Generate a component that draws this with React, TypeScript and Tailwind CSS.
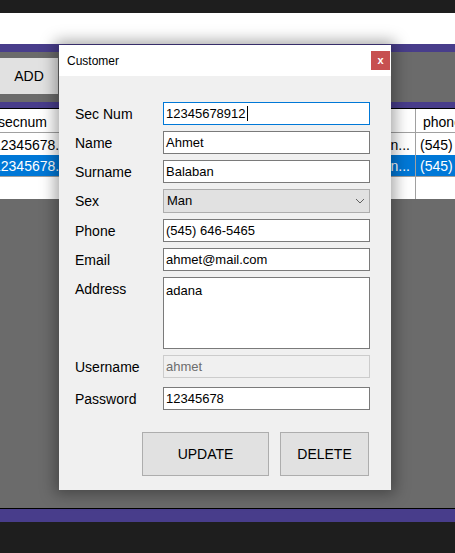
import React from 'react';

const font = "font-['Liberation_Sans',Arial,sans-serif]";

type FieldKind = 'normal' | 'focused' | 'disabled';

const fieldStyles: Record<FieldKind, string> = {
  normal: 'border-[#7a7a7a] bg-white text-black',
  focused: 'border-[#0078d7] bg-white text-black',
  disabled: 'border-[#cccccc] bg-[#f0f0f0] text-[#6d6d6d]',
};

function Field({ children, kind = 'normal' }: { children?: React.ReactNode; kind?: FieldKind }) {
  return (
    <div className={`h-[23px] w-[207px] border pl-[2px] flex items-center text-[13px] ${fieldStyles[kind]}`}>
      {children}
    </div>
  );
}

function Row({ label, children, className = '' }: { label: string; children: React.ReactNode; className?: string }) {
  return (
    <div className={`flex items-start ${className}`}>
      <div className="w-[88px] h-[23px] pt-[2px] flex items-center text-[14px] text-black">{label}</div>
      {children}
    </div>
  );
}

function CustomerDialog() {
  return (
    <div className="absolute left-[59px] top-[45px] w-[332px] h-[445px] bg-[#f0f0f0] shadow-[0_0_14px_4px_rgba(0,0,0,0.35)] flex flex-col">
      {/* title bar */}
      <div className="h-[31px] bg-white flex items-center justify-between pl-[8px] pr-[1px]">
        <span className="text-[12px] text-black">Customer</span>
        <div className="w-[19px] h-[19px] bg-[#c75050] flex items-center justify-center text-white text-[11px] font-bold leading-none pb-[1px]">
          x
        </div>
      </div>

      <div className="flex flex-col pl-[16px] pt-[26px]">
        <Row label="Sec Num">
          <Field kind="focused">
            <span>12345678912</span>
            <span className="w-px h-[15px] bg-black ml-px" />
          </Field>
        </Row>
        <Row label="Name" className="mt-[6px]">
          <Field>Ahmet</Field>
        </Row>
        <Row label="Surname" className="mt-[6px]">
          <Field>Balaban</Field>
        </Row>
        <Row label="Sex" className="mt-[6px]">
          <div className="h-[24px] w-[207px] border border-[#adadad] bg-[#e1e1e1] pl-[3px] pr-[4px] flex items-center justify-between text-[13px] text-black">
            <span>Man</span>
            <svg width="10" height="6" viewBox="0 0 10 6" fill="none">
              <polyline points="1,1 5,5 9,1" stroke="#606060" strokeWidth="1" />
            </svg>
          </div>
        </Row>
        <Row label="Phone" className="mt-[6px]">
          <Field>(545) 646-5465</Field>
        </Row>
        <Row label="Email" className="mt-[6px]">
          <Field>ahmet@mail.com</Field>
        </Row>
        <Row label="Address" className="mt-[6px]">
          <div className="h-[72px] w-[207px] border border-[#7a7a7a] bg-white pl-[2px] pt-[3px] text-[13px] text-black">
            adana
          </div>
        </Row>
        <Row label="Username" className="mt-[6px]">
          <Field kind="disabled">ahmet</Field>
        </Row>
        <Row label="Password" className="mt-[9px]">
          <Field>12345678</Field>
        </Row>
      </div>

      <div className="flex justify-end gap-[11px] pr-[22px] mt-[22px]">
        <div className="w-[127px] h-[44px] bg-[#e1e1e1] border border-[#adadad] flex items-center justify-center text-[14px] text-black">
          UPDATE
        </div>
        <div className="w-[89px] h-[44px] bg-[#e1e1e1] border border-[#adadad] flex items-center justify-center text-[14px] text-black">
          DELETE
        </div>
      </div>
    </div>
  );
}

export default function App() {
  return (
    <div className={`relative w-[455px] h-[553px] overflow-hidden bg-[#1e1e1e] ${font}`}>
      <div className="h-[13px] bg-[#1e1e1e]" />
      <div className="h-[31px] bg-white" />
      <div className="h-[8px] bg-[#483d8b]" />

      {/* toolbar */}
      <div className="h-[50px] bg-[#6b6b6b] pt-[6px]">
        <div className="w-[58px] h-[36px] bg-[#e1e1e1] flex items-center justify-center text-[14px] text-black">
          ADD
        </div>
      </div>
      <div className="h-[6px] bg-[#483d8b]" />
      <div className="h-px bg-black" />

      {/* grid */}
      <div className="h-[90px] bg-white text-[14px] text-black flex">
        <div className="flex-1 flex flex-col overflow-hidden whitespace-nowrap">
          <div className="h-[24px] pt-[3px] border-b border-[#a0a0a0] flex items-center -ml-[2px]">secnum</div>
          <div className="h-[22px] pt-[2px] flex items-center -ml-[7px]">12345678...</div>
          <div className="h-[22px] pt-[2px] flex items-center -ml-[7px] bg-[#0078d7] text-white border-b border-[#a0a0a0]">
            12345678...
          </div>
          <div className="h-[22px]" />
        </div>
        <div className="w-[50px] flex flex-col border-r border-[#a0a0a0] whitespace-nowrap">
          <div className="h-[24px] border-b border-[#a0a0a0]" />
          <div className="h-[22px] pt-[2px] flex items-center justify-end pr-[5px]">Balaban...</div>
          <div className="h-[22px] pt-[2px] flex items-center justify-end pr-[5px] bg-[#0078d7] text-white border-b border-[#a0a0a0]">
            Balaban...
          </div>
          <div className="h-[22px]" />
        </div>
        <div className="w-[39px] flex flex-col overflow-hidden whitespace-nowrap">
          <div className="h-[24px] pt-[3px] border-b border-[#a0a0a0] flex items-center pl-[7px]">phone</div>
          <div className="h-[22px] pt-[2px] flex items-center pl-[4px]">(545) 646-5465</div>
          <div className="h-[22px] pt-[2px] flex items-center pl-[4px] bg-[#0078d7] text-white border-b border-[#a0a0a0]">
            (545) 646-5465
          </div>
          <div className="h-[22px]" />
        </div>
      </div>

      <div className="h-[309px] bg-[#6b6b6b]" />
      <div className="h-px bg-black" />
      <div className="h-[13px] bg-[#483d8b]" />

      <CustomerDialog />
    </div>
  );
}
